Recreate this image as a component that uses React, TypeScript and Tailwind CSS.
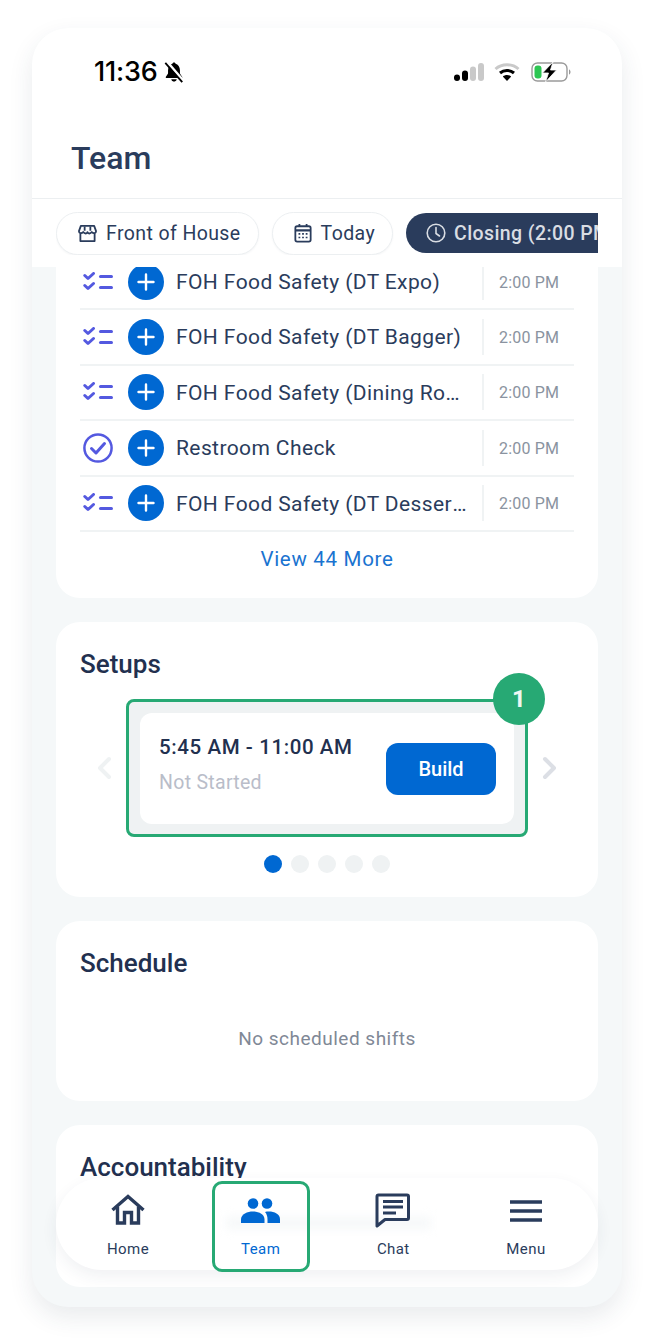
import { ReactNode } from "react";

const rows = [
  { title: "FOH Food Safety (DT Expo)", done: false },
  { title: "FOH Food Safety (DT Bagger)", done: false },
  { title: "FOH Food Safety (Dining Room)", done: false },
  { title: "Restroom Check", done: true },
  { title: "FOH Food Safety (DT Desserts)", done: false },
];

function ChecklistIcon() {
  return (
    <svg width="30" height="20" viewBox="0 0 30 20" fill="none" stroke="#5459e0" strokeWidth="3" strokeLinecap="round" strokeLinejoin="round">
      <path d="M1.800 3.500 L5 6.500 L10.500 1.500" />
      <path d="M1.800 13.500 L5 16.500 L10.500 11.500" />
      <path d="M17.500 4.500 H28.500" />
      <path d="M17.500 15.500 H28.500" />
    </svg>
  );
}

function CheckCircleIcon() {
  return (
    <svg width="30" height="30" viewBox="0 0 30 30" fill="none" stroke="#5459e0" strokeWidth="2.500" strokeLinecap="round" strokeLinejoin="round">
      <circle cx="15" cy="15" r="13.600" />
      <path d="M8.500 15.500 L13 20 L21.500 10.500" strokeWidth="3" />
    </svg>
  );
}

function PlusButton() {
  return (
    <div className="flex h-9 w-9 shrink-0 items-center justify-center rounded-full bg-[#0068d2]">
      <svg width="18" height="18" viewBox="0 0 18 18" stroke="#fff" strokeWidth="2.400" strokeLinecap="round">
        <path d="M9 1.500 V16.500 M1.500 9 H16.500" />
      </svg>
    </div>
  );
}

function Chip({ icon, label, dark }: { icon: ReactNode; label: string; dark?: boolean }) {
  return (
    <div
      className={
        dark
          ? "flex h-[40px] shrink-0 items-center gap-2 rounded-full bg-[#2a3c5c] pl-[20px] pr-5 text-[19.5px] font-medium tracking-[0.4px] text-[#d9dde3]"
          : "flex h-[43px] shrink-0 items-center gap-[9px] rounded-full border border-[#eceff1] bg-white pl-[21px] pr-[17px] text-[19.5px] tracking-[0.4px] text-[#2a3c5c] shadow-[0_1px_2px_rgba(30,50,80,0.05)]"
      }
    >
      {icon}
      <span className="whitespace-nowrap pt-[2px]">{label}</span>
    </div>
  );
}

function NavItem({ icon, label, active }: { icon: ReactNode; label: string; active?: boolean }) {
  return (
    <div className="relative flex w-[98px] flex-col items-center">
      <div className="flex h-[38px] items-center justify-center">{icon}</div>
      <span className={active ? "mt-[10px] text-[15px] tracking-[0.5px] text-[#0068d2]" : "mt-[10px] text-[15px] tracking-[0.4px] text-[#2a3c5c]"}>
        {label}
      </span>
    </div>
  );
}

export default function App() {
  return (
    <div className="h-[1343px] w-[654px] bg-white pt-[28px] pl-[32px] font-['Roboto',sans-serif]">
      <div className="relative h-[1279px] w-[590px] overflow-hidden rounded-[36px] bg-[#f5f8f9] shadow-[0_10px_24px_rgba(40,60,80,0.10)]">
        {/* Header */}
        <div className="bg-white">
          <div className="h-[88px] pt-[27px] pl-[62px] pr-[49px]">
            <div className="flex h-[34px] items-center justify-between">
              <div className="flex items-center gap-[5px] font-['Inter',sans-serif] text-[27px] leading-[34px] font-medium text-black">
                <span className="tracking-[-0.2px]">11:36</span>
                <svg width="22" height="22" viewBox="0 0 24 24">
                  <path d="M12 1.500c-1 0-1.700.7-1.700 1.500C7.600 3.800 5.500 6.500 5.500 10v3.500L3 17.500c-.3.500 0 1 .6 1h16.800c.6 0 .9-.5.6-1l-2.500-4V10c0-3.500-2.100-6.200-4.800-7C13.700 2.200 13 1.500 12 1.500z" fill="#000" />
                  <path d="M9 20c.3 1.400 1.500 2.500 3 2.500s2.700-1.100 3-2.500z" fill="#000" />
                  <path d="M4.500 1 L22 21.500" stroke="#fff" strokeWidth="3" />
                  <path d="M2.500 2 L21 23" stroke="#000" strokeWidth="2" />
                </svg>
              </div>
              <div className="flex items-center gap-[10px]">
                <svg width="30" height="18" viewBox="0 0 30 18">
                  <rect x="0" y="11.500" width="6" height="6.500" rx="3" fill="#000" />
                  <rect x="8" y="7.500" width="6" height="10.500" rx="3" fill="#000" />
                  <rect x="16" y="3.500" width="6" height="14.500" rx="3" fill="#c9c9c9" />
                  <rect x="24" y="0" width="6" height="18" rx="3" fill="#c9c9c9" />
                </svg>
                <svg width="26" height="18" viewBox="0 0 26 18" fill="none">
                  <path d="M1.500 6 C7.800 .3 18.200 .3 24.500 6" stroke="#c9c9c9" strokeWidth="3" />
                  <path d="M6 10 C10 6.500 16 6.500 20 10" stroke="#000" strokeWidth="3" />
                  <path d="M13 18 L8.800 13.500 C11.200 11.500 14.800 11.500 17.200 13.500 Z" fill="#000" />
                </svg>
                <svg width="42" height="20" viewBox="0 0 42 20" fill="none" className="ml-[1px]">
                  <rect x="1" y="1" width="35" height="18" rx="5.500" stroke="#9a9a9a" strokeWidth="1.400" />
                  <rect x="3.500" y="3.500" width="7" height="13" rx="3" fill="#2dc653" />
                  <path d="M38 7.500 C40 8 40 12 38 12.500 Z" fill="#9a9a9a" />
                  <path d="M22 0 L11.500 11 H17.500 L14.500 20 L25.500 8 H19.500 Z" fill="#000" stroke="#fff" strokeWidth="0.800" />
                </svg>
              </div>
            </div>
          </div>
          <div className="flex h-[83px] items-center border-b border-[#eceff1] pl-[39px] pt-[1px]">
            <h1 className="text-[32px] font-medium text-[#2a3c5c]">Team</h1>
          </div>
          <div className="flex h-[68px] items-center overflow-hidden pl-[24px]">
            <div className="flex w-[542px] items-center gap-[13px] overflow-hidden">
              <Chip
                label="Front of House"
                icon={
                  <svg width="19" height="19" viewBox="0 0 20 20" fill="none" stroke="#2a3c5c" strokeWidth="1.900" strokeLinejoin="round">
                    <path d="M3 2 H17 L19 7.500 C19 9.500 16.500 10.500 14.500 8.500 C13 10.500 11 10.500 10 8.500 C9 10.500 7 10.500 5.500 8.500 C3.500 10.500 1 9.500 1 7.500 Z" />
                    <path d="M7 2.500 V7 M13 2.500 V7" />
                    <path d="M2.500 10 V18 H17.500 V10" />
                  </svg>
                }
              />
              <Chip
                label="Today"
                icon={
                  <svg width="18" height="20" viewBox="0 0 20 22" fill="none" stroke="#2a3c5c" strokeWidth="2">
                    <rect x="1.500" y="3.500" width="17" height="17" rx="2" />
                    <path d="M1.500 8 H18.500" strokeWidth="2.600" />
                    <path d="M6 1 V4 M14 1 V4" />
                    <path d="M5 12 H7 M9 12 H11 M13 12 H15 M5 16 H7 M9 16 H11 M13 16 H15" strokeWidth="1.800" />
                  </svg>
                }
              />
              <Chip
                dark
                label="Closing (2:00 PM - 9:00 PM)"
                icon={
                  <svg width="20" height="20" viewBox="0 0 20 20" fill="none" stroke="#d9dde3" strokeWidth="1.600" strokeLinecap="round">
                    <circle cx="10" cy="10" r="8.800" />
                    <path d="M10 4.500 V10.500 L13.500 13" />
                  </svg>
                }
              />
            </div>
          </div>
        </div>

        {/* Scrolling content */}
        <div className="flex flex-col gap-[24px] px-[24px]">
          <div className="overflow-hidden rounded-b-[24px] bg-white px-[24px]">
            <div className="-mt-[12px]">
              {rows.map((row) => (
                <div key={row.title} className="flex h-[55.400px] items-center border-b-2 border-[#f0f3f4]">
                  <div className="flex w-[36px] shrink-0 justify-center">{row.done ? <CheckCircleIcon /> : <ChecklistIcon />}</div>
                  <div className="ml-[12px]">
                    <PlusButton />
                  </div>
                  <div className="ml-[12px] w-[294px] truncate pt-[2px] text-[21px] tracking-[0.4px] text-[#2a3c5c]">{row.title}</div>
                  <div className="ml-[12px] flex h-[36px] items-center border-l-2 border-[#f0f3f4] pl-[15px] pt-[2px] text-[16px] tracking-[0.2px] text-[#8a93a0]">2:00 PM</div>
                </div>
              ))}
            </div>
            <div className="flex h-[66px] items-start justify-center pt-[13px] text-[20.5px] leading-[28px] tracking-[0.7px] text-[#1a73d0]">View 44 More</div>
          </div>

          <div className="h-[275px] rounded-[24px] bg-white px-[24px] pt-[25px]">
            <h2 className="text-[26px] leading-[34px] font-medium text-[#22304f]">Setups</h2>
            <div className="mt-[18px] flex items-center justify-between px-[15px]">
              <svg width="20" height="24" viewBox="0 0 20 24" fill="none" stroke="#eff2f3" strokeWidth="4" strokeLinecap="round" strokeLinejoin="round">
                <path d="M14 3 L5 12 L14 21" />
              </svg>
              <div className="relative h-[138px] w-[402px] rounded-[8px] border-[3px] border-[#27a974] bg-[#eff2f3] px-[11px] pt-[11px]">
                <div className="flex h-[111px] items-center justify-between rounded-[12px] bg-white pl-[19px] pr-[18px]">
                  <div className="-mt-[8px]">
                    <div className="text-[20.5px] font-medium tracking-[0.6px] text-[#22304f]">5:45 AM - 11:00 AM</div>
                    <div className="mt-[5px] text-[19.5px] tracking-[0.3px] text-[#b9bdc9]">Not Started</div>
                  </div>
                  <button className="mt-[2px] h-[52px] w-[110px] rounded-[12px] bg-[#0068d2] text-[20px] font-medium text-white">Build</button>
                </div>
                <div className="absolute -top-[29px] -right-[20px] flex h-[52px] w-[52px] items-center justify-center rounded-full bg-[#27a974] text-[24px] font-bold text-[#eef7f3]">1</div>
              </div>
              <svg width="20" height="24" viewBox="0 0 20 24" fill="none" stroke="#dcdfe5" strokeWidth="4" strokeLinecap="round" strokeLinejoin="round">
                <path d="M6 3 L15 12 L6 21" />
              </svg>
            </div>
            <div className="mt-[18px] flex justify-center gap-[9px]">
              <div className="h-[18px] w-[18px] rounded-full bg-[#0068d2]" />
              <div className="h-[18px] w-[18px] rounded-full bg-[#eff2f3]" />
              <div className="h-[18px] w-[18px] rounded-full bg-[#eff2f3]" />
              <div className="h-[18px] w-[18px] rounded-full bg-[#eff2f3]" />
              <div className="h-[18px] w-[18px] rounded-full bg-[#eff2f3]" />
            </div>
          </div>

          <div className="h-[180px] rounded-[24px] bg-white px-[24px] pt-[25px]">
            <h2 className="text-[26px] leading-[34px] font-medium text-[#22304f]">Schedule</h2>
            <div className="mt-[45px] text-center text-[19px] tracking-[0.5px] text-[#7f8896]">No scheduled shifts</div>
          </div>

          <div className="h-[162px] rounded-[24px] bg-white px-[24px] pt-[25px]">
            <h2 className="text-[26px] leading-[34px] font-medium text-[#22304f]">Accountability</h2>
          </div>
        </div>

        {/* Bottom nav */}
        <div className="absolute top-[1150px] left-[24px] flex h-[92px] w-[542px] items-start justify-between rounded-[46px] bg-white px-[23px] pt-[12px] shadow-[0_6px_16px_rgba(40,60,80,0.07)]">
          <div className="absolute top-[38px] left-[170px] h-[14px] w-[205px] bg-[#f7f9fa] blur-[4px]" />
          <NavItem
            label="Home"
            icon={
              <svg width="34" height="31" viewBox="0 0 34 31" fill="none" stroke="#2a3c5c" strokeWidth="3.400">
                <path d="M1.500 16 L17 2.500 L32.500 16" />
                <path d="M6.500 12.500 V29 H13.500 V18.500 H20.500 V29 H27.500 V12.500" />
              </svg>
            }
          />
          <NavItem
            active
            label="Team"
            icon={
              <svg width="39" height="25" viewBox="0 0 39 25" fill="#0068d2" className="mt-[3px]">
                <circle cx="12" cy="5.500" r="5.300" />
                <circle cx="26" cy="5.500" r="5.300" />
                <path d="M0 25 V21.500 C0 16 6.500 13.500 12 13.500 C17.500 13.500 23.500 16 23.500 21.500 V25 Z" />
                <path d="M24 14 C30.500 12.500 39 15 39 21 V25 H26.500 V21.500 C26.500 18.500 25.800 16 24 14 Z" />
              </svg>
            }
          />
          <NavItem
            label="Chat"
            icon={
              <svg width="36" height="35" viewBox="0 0 36 35" fill="none" stroke="#2a3c5c" strokeWidth="3" className="mt-[3px]">
                <path d="M2 3.500 Q2 2 3.500 2 H32 Q33.500 2 33.500 3.500 V25 Q33.500 26.500 32 26.500 H10 L2 33 Z" strokeLinejoin="round" />
                <path d="M8 8.500 H28 M8 14 H28 M8 20 H21" />
              </svg>
            }
          />
          <NavItem
            label="Menu"
            icon={
              <svg width="32" height="22" viewBox="0 0 32 22" fill="none" stroke="#2a3c5c" strokeWidth="3.400" className="mt-[3px]">
                <path d="M0 2 H32 M0 11 H32 M0 20 H32" />
              </svg>
            }
          />
        </div>
        <div className="absolute top-[1153px] left-[180px] h-[91px] w-[98px] rounded-[10px] border-[3px] border-[#27a974]" />
      </div>
    </div>
  );
}
